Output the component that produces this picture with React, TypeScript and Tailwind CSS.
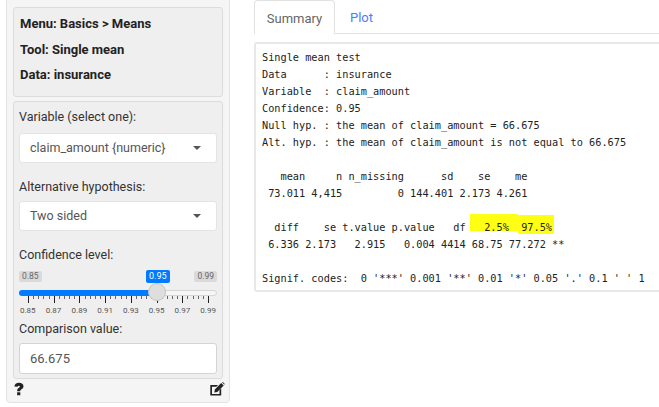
import React from 'react';

const sans = "font-['Roboto','Open_Sans',sans-serif]";
const mono = "font-['DejaVu_Sans_Mono',monospace]";

const ticks = [0.85, 0.87, 0.89, 0.91, 0.93, 0.95, 0.97, 0.99];

const output = `Single mean test
Data      : insurance
Variable  : claim_amount
Confidence: 0.95
Null hyp. : the mean of claim_amount = 66.675
Alt. hyp. : the mean of claim_amount is not equal to 66.675

   mean     n n_missing      sd    se    me
 73.011 4,415         0 144.401 2.173 4.261
`;

const SelectBox = ({ value }: { value: string }) => (
  <div className="flex h-[30px] items-center justify-between rounded-[3px] border border-[#e4e4e4] bg-white pl-[10px] pr-[15px] text-[12.5px] text-[#555]">
    <span>{value}</span>
    <span className="h-0 w-0 border-x-[4px] border-t-[4px] border-x-transparent border-t-[#555]" />
  </div>
);

const SliderTicks = () => (
  <svg width="197" height="8" className="block">
    {Array.from({ length: 36 }).map((_, i) => {
      const x = Math.round(9 + (i * 180) / 35) + 0.5;
      const major = i % 5 === 0;
      return <line key={i} x1={x} x2={x} y1={0} y2={major ? 7 : 3} stroke={major ? '#222' : '#666'} strokeWidth="1" />;
    })}
  </svg>
);

export default function App() {
  return (
    <div className={`flex h-[407px] w-[659px] overflow-hidden bg-white ${sans}`}>
      <div className="ml-[6px] mt-[-4px] h-[407px] w-[224px] shrink-0 rounded-[4px] border border-[#e3e3e3] bg-[#f5f5f5] px-[6px] pt-[10px]">
        <div className="h-[90px] rounded-[3px] border border-[#dcdcdc] bg-[#efefef] px-[6px] pt-[3px] text-[13px] font-bold leading-[25.5px] text-[#222]">
          <div>Menu: Basics &gt; Means</div>
          <div>Tool: Single mean</div>
          <div>Data: insurance</div>
        </div>
        <div className="mt-[4px] h-[278px] rounded-[3px] border border-[#dcdcdc] bg-[#efefef] px-[5px] pt-[3px] text-[12.5px] text-[#333]">
          <div className="mb-[4px] leading-[24px]">Variable (select one):</div>
          <SelectBox value="claim_amount {numeric}" />
          <div className="mb-[2px] mt-[12px] leading-[24px]">Alternative hypothesis:</div>
          <SelectBox value="Two sided" />
          <div className="mt-[12px] leading-[24px]">Confidence level:</div>
          <div className="relative mt-[4px] h-[34px]">
            <span className="absolute left-0 top-0 rounded-[2px] bg-[#dadada] px-[3px] text-[8.5px] leading-[11px] text-[#666]">0.85</span>
            <span className="absolute right-0 top-0 rounded-[2px] bg-[#dadada] px-[3px] text-[8.5px] leading-[11px] text-[#666]">0.99</span>
            <span className="absolute left-[127px] top-[-1px] rounded-[2px] bg-[#007bff] px-[3px] text-[9px] leading-[13px] text-white">0.95</span>
            <div className="absolute left-0 right-0 top-[19px] h-[6px] rounded-full border border-[#d5d5d5] bg-[#f6f6f6]" />
            <div className="absolute left-0 top-[19px] h-[6px] w-[137px] rounded-l-full bg-[#007bff]" />
            <div className="absolute left-0 top-[25px]">
              <SliderTicks />
            </div>
            <div className="absolute left-[129px] top-[12px] h-[18px] w-[18px] rounded-full border border-[#c4c4c4] bg-[#dedede]" />
          </div>
          <div className="flex justify-between px-[1px] text-[8px] leading-[11px] text-[#555]">
            {ticks.map((t) => (
              <span key={t}>{t.toFixed(2)}</span>
            ))}
          </div>
          <div className="mt-[1px] leading-[24px]">Comparison value:</div>
          <div className="mt-[2px] flex h-[31px] items-center rounded-[3px] border border-[#d4d4d4] bg-white pl-[10px] text-[13px] text-[#555]">
            66.675
          </div>
        </div>
        <div className="mr-[-2px] flex items-start justify-between pt-[3px]">
          <svg width="12" height="14" viewBox="0 0 12 15">
            <path d="M1 4.8C1.2 2.3 3.2.8 6 .8c2.9 0 4.8 1.5 4.8 3.8 0 1.7-1 2.6-2.1 3.3-1 .6-1.3 1-1.3 1.9H4c0-1.8.5-2.6 1.6-3.3.8-.5 1.3-1 1.3-1.6 0-.7-.4-1-1.1-1-.7 0-1.2.4-1.3 1.2zM4 11h3.4v3.2H4z" fill="#222" />
          </svg>
          <svg width="16" height="14" viewBox="0 0 16 14">
            <path d="M1.5 3h7.5L7.3 4.7H3v7.2h7.5V8l1.7-1.7v7.3H1.3V3z" fill="#222" />
            <path d="M5.8 7.4 12.2 1 14.7 3.5 8.3 9.9 5.3 10.4zM13 .3l.8-.3L15.6 1.8l-.2.9z" fill="#222" />
          </svg>
        </div>
      </div>

      <div className="ml-[24px] flex-1">
        <div className="flex h-[34px] border-b border-[#e2e2e2] text-[13px]">
          <div className="h-[34px] w-[81px] rounded-t-[4px] border border-b-0 border-[#e2e2e2] bg-white pt-[8px] text-center text-[#666]">Summary</div>
          <div className="w-[70px] pl-[15px] pt-[8px] text-[#4a7dff]">Plot</div>
        </div>
        <div className={`mt-[8px] h-[250px] rounded-l-[3px] border-y-2 border-l-2 border-[#e8e8e8] pl-[6px] pt-[5px] text-[10.25px] leading-[17px] text-[#222] ${mono}`}>
          <pre className={mono}>{output}</pre>
          <div className="relative mt-[17px]">
            {/* hand drawn marker over the 2.5% / 97.5% headers */}
            <svg width="84" height="20" className="absolute left-[208px] top-[-5px]">
              <path d="M0 0L48 0L48 1L84 1L84 20L48 20L48 17L0 17Z" fill="#ffff14" />
            </svg>
            <pre className={`relative ${mono}`}>
              {"  diff    se t.value p.value   df   2.5%  97.5%\n 6.336 2.173   2.915   0.004 4414 68.75 77.272 **\n\nSignif. codes:  0 '***' 0.001 '**' 0.01 '*' 0.05 '.' 0.1 ' ' 1"}
            </pre>
          </div>
        </div>
      </div>
    </div>
  );
}
